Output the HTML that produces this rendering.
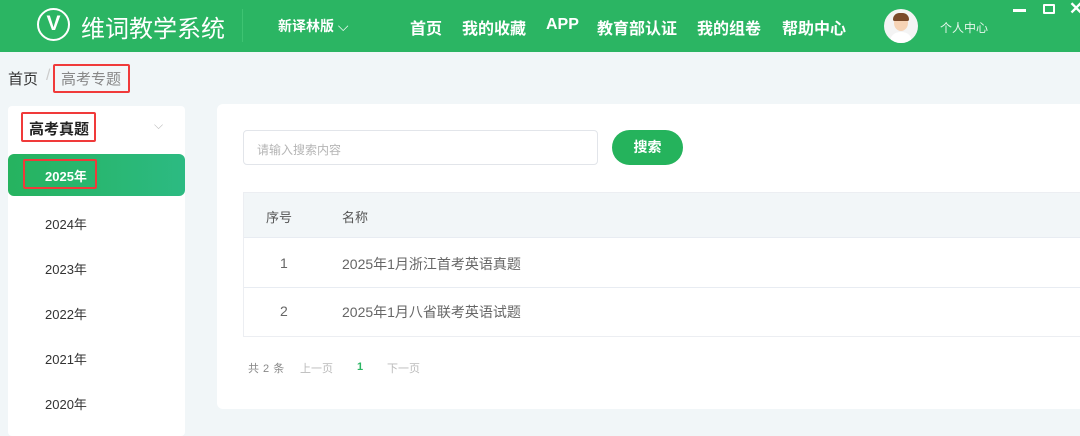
<!DOCTYPE html>
<html><head><meta charset="utf-8"><style>
*{margin:0;padding:0;box-sizing:border-box}
body{width:1080px;height:424px;overflow:hidden;background:#f1f6f8;font-family:"Liberation Sans","Noto Sans CJK SC",sans-serif;position:relative}
.a{position:absolute}
.hdr{left:0;top:0;width:1080px;height:52px;background:#2bb563;color:#fff}
.nav{top:15px;font-size:16px;font-weight:bold;color:#fff}
.red{border:2px solid #f03a3a;border-radius:2px}
</style></head><body>
<div class="a hdr">
  <div class="a" style="left:37px;top:8px;width:33px;height:33px;border:2.5px solid #fff;border-radius:50%;font-size:21px;text-align:center;line-height:28px;font-weight:bold">V</div>
  <div class="a" style="left:81px;top:9px;font-size:24px;color:#fff">维词教学系统</div>
  <div class="a" style="left:242px;top:9px;width:1px;height:33px;background:#3ec372"></div>
  <div class="a nav" style="left:278px;top:16px;font-size:14px">新译林版 <span style="font-weight:normal">⌵</span></div>
  <div class="a nav" style="left:410px">首页</div>
  <div class="a nav" style="left:462px">我的收藏</div>
  <div class="a nav" style="left:546px;top:16px">APP</div>
  <div class="a nav" style="left:597px">教育部认证</div>
  <div class="a nav" style="left:697px">我的组卷</div>
  <div class="a nav" style="left:782px">帮助中心</div>
  <div class="a" style="left:884px;top:9px;width:34px;height:34px;border-radius:50%;background:#f4f4f4;overflow:hidden">
    <div class="a" style="left:10px;top:6px;width:14px;height:16px;border-radius:50%;background:#f6d3b5"></div>
    <div class="a" style="left:9px;top:4px;width:16px;height:8px;border-radius:8px 8px 2px 2px;background:#7a4a2a"></div>
    <div class="a" style="left:6px;top:23px;width:22px;height:14px;border-radius:10px 10px 0 0;background:#fff"></div>
  </div>
  <div class="a" style="left:940px;top:19px;font-size:12px;color:#e6f7ec">个人中心</div>
  <div class="a" style="left:1013px;top:9px;width:13px;height:3px;background:#fff"></div>
  <div class="a" style="left:1043px;top:4px;width:12px;height:10px;border:2.5px solid #fff;border-radius:1px"></div>
  <div class="a" style="left:1069px;top:-1px;color:#fff;font-size:17px;font-weight:bold">✕</div>
</div>
<div class="a" style="left:8px;top:68px;font-size:15px;color:#333">首页</div>
<div class="a" style="left:46px;top:67px;font-size:16px;color:#ccc">/</div>
<div class="a red" style="left:53px;top:64px;width:77px;height:29px"></div>
<div class="a" style="left:61px;top:68px;font-size:15px;color:#888">高考专题</div>

<div class="a" style="left:8px;top:106px;width:177px;height:330px;background:#fff;border-radius:4px"></div>
<div class="a red" style="left:21px;top:112px;width:75px;height:30px"></div>
<div class="a" style="left:29px;top:118px;font-size:15px;font-weight:bold;color:#222">高考真题</div>
<div class="a" style="left:154px;top:118px;font-size:12px;color:#bbb">⌵</div>
<div class="a" style="left:8px;top:154px;width:177px;height:42px;border-radius:6px;background:linear-gradient(90deg,#26b35f,#2cba82)"></div>
<div class="a red" style="left:23px;top:159px;width:74px;height:30px"></div>
<div class="a" style="left:45px;top:166px;font-size:13px;font-weight:bold;color:#fff">2025年</div>
<div class="a" style="left:45px;top:214px;font-size:13px;color:#333">2024年</div>
<div class="a" style="left:45px;top:259px;font-size:13px;color:#333">2023年</div>
<div class="a" style="left:45px;top:304px;font-size:13px;color:#333">2022年</div>
<div class="a" style="left:45px;top:349px;font-size:13px;color:#333">2021年</div>
<div class="a" style="left:45px;top:394px;font-size:13px;color:#333">2020年</div>

<div class="a" style="left:217px;top:104px;width:880px;height:305px;background:#fff;border-radius:6px"></div>
<div class="a" style="left:243px;top:130px;width:355px;height:35px;border:1px solid #e2e5ea;border-radius:4px"></div>
<div class="a" style="left:257px;top:141px;font-size:12px;color:#b5b5b5">请输入搜索内容</div>
<div class="a" style="left:612px;top:130px;width:71px;height:35px;border-radius:18px;background:#25b35c;color:#fff;font-size:14px;font-weight:bold;text-align:center;line-height:35px">搜索</div>
<div class="a" style="left:243px;top:192px;width:837px;height:145px;border:1px solid #eceef2;border-right:none"></div>
<div class="a" style="left:244px;top:193px;width:836px;height:45px;background:#f2f6f8;border-bottom:1px solid #e8ecf2"></div>
<div class="a" style="left:244px;top:287px;width:836px;height:1px;background:#e8ecf2"></div>
<div class="a" style="left:266px;top:207px;font-size:13px;color:#555">序号</div>
<div class="a" style="left:342px;top:207px;font-size:13px;color:#555">名称</div>
<div class="a" style="left:280px;top:255px;font-size:14px;color:#666">1</div>
<div class="a" style="left:342px;top:254px;font-size:14px;color:#666">2025年1月浙江首考英语真题</div>
<div class="a" style="left:280px;top:303px;font-size:14px;color:#666">2</div>
<div class="a" style="left:342px;top:302px;font-size:14px;color:#666">2025年1月八省联考英语试题</div>
<div class="a" style="left:248px;top:360px;font-size:11px;color:#888;word-spacing:1px">共 2 条</div>
<div class="a" style="left:300px;top:360px;font-size:11px;color:#bbb">上一页</div>
<div class="a" style="left:357px;top:361px;font-size:11px;color:#2bb563;font-weight:bold">1</div>
<div class="a" style="left:387px;top:360px;font-size:11px;color:#bbb">下一页</div>
</body></html>
